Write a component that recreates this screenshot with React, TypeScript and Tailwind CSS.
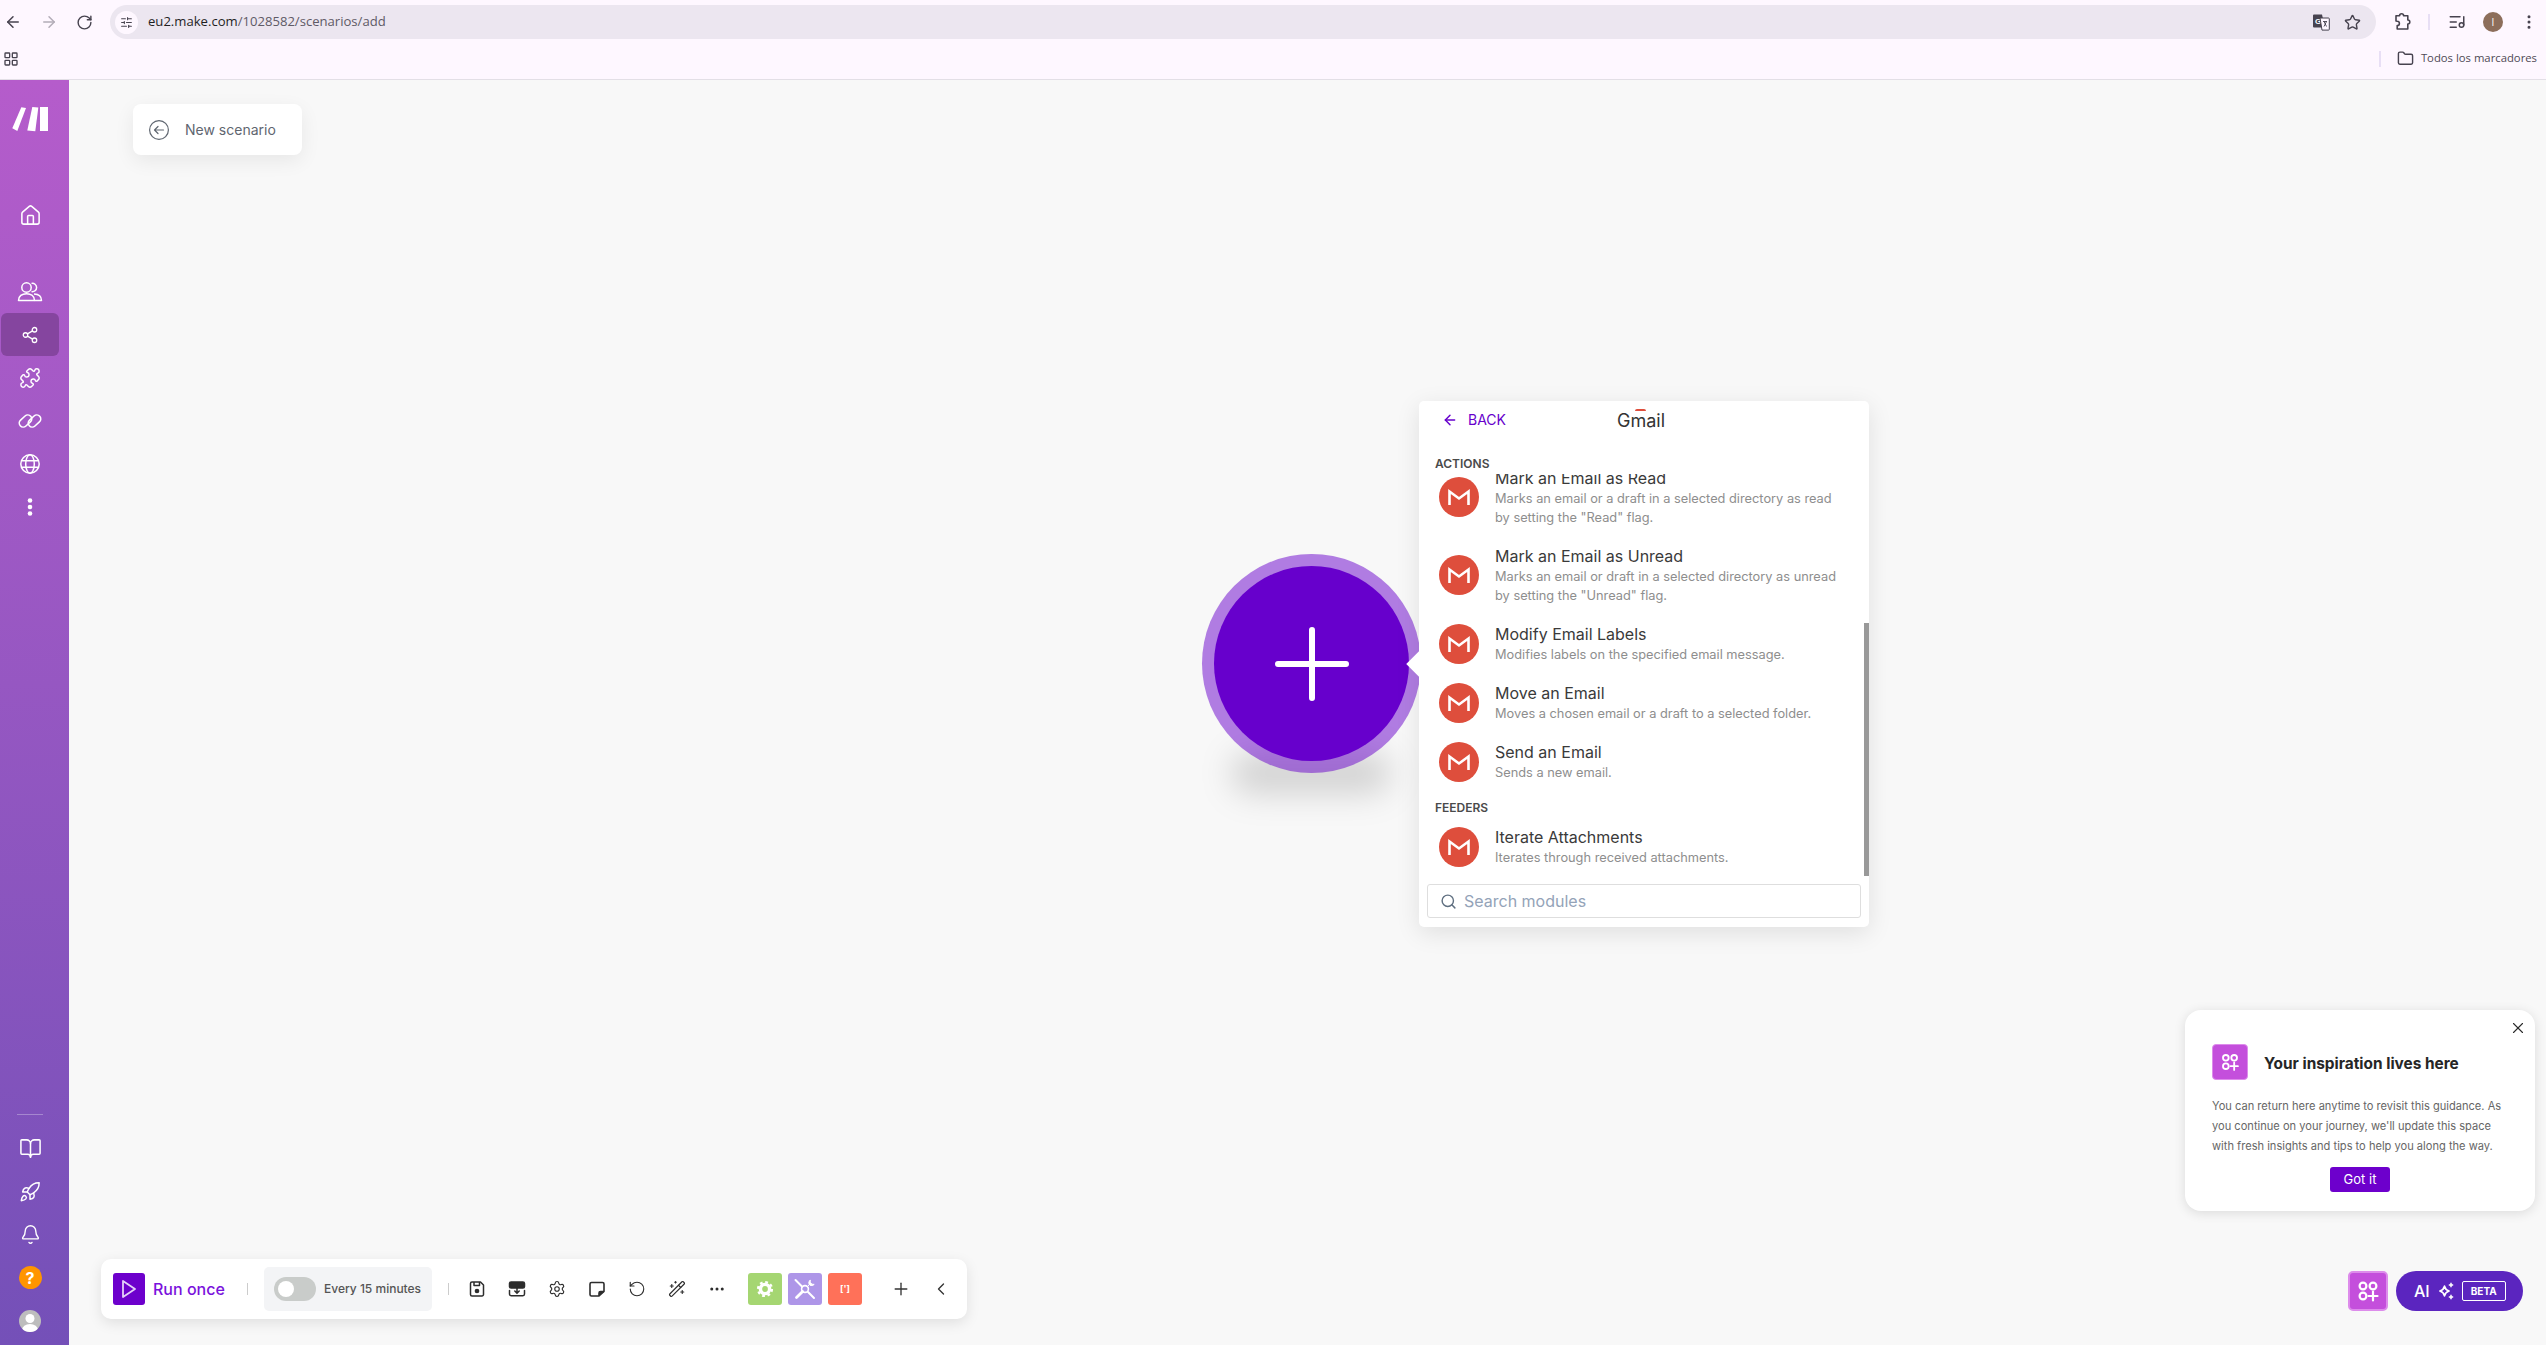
import React from "react";
import {
  ArrowLeft,
  ArrowRight,
  Bell,
  BookOpen,
  ChevronLeft,
  Ellipsis,
  EllipsisVertical,
  Folder,
  House,
  LayoutGrid,
  ListMusic,
  Plus,
  Puzzle,
  Rocket,
  RotateCcw,
  RotateCw,
  Search,
  Settings,
  Share2,
  SlidersHorizontal,
  Star,
  WandSparkles,
  X,
} from "lucide-react";

const GmailIcon = ({ lift }: { lift: boolean }) => (
  <div className={`w-[40px] h-[40px] shrink-0 rounded-full bg-[#de4e3c] flex items-center justify-center ${lift ? "mb-[2px]" : ""}`}>
    <svg width="40" height="40" viewBox="0 0 40 40" fill="none" stroke="#fff" strokeWidth="2.6">
      <path d="M10.5 28V14.5L20 21.5L29.5 14.5V28" />
    </svg>
  </div>
);

const AppsPlus = ({ size }: { size: number }) => (
  <svg width={size} height={size} viewBox="0 0 24 24" fill="none" stroke="#fff" strokeWidth="2.2" strokeLinecap="round">
    <circle cx="7" cy="7" r="3.4" />
    <circle cx="17" cy="7" r="3.4" />
    <circle cx="7" cy="17" r="3.4" />
    <path d="M12.5 17h9M17 12.5v9" />
  </svg>
);

const MakeLogo = () => (
  <svg width="36" height="26" viewBox="0 0 36 26" fill="#fff">
    <polygon points="9.3,1.3 14,2 5.3,25 0.3,22.3" />
    <polygon points="20.3,1 26.3,1.5 23.3,25.3 15.3,24.5" />
    <polygon points="28,1 36,1 36,25 28,25" />
  </svg>
);

const TranslateIcon = () => (
  <svg width="18" height="18" viewBox="0 0 18 18">
    <path d="M1 2.5a1 1 0 0 1 1-1h8l3 13H2a1 1 0 0 1-1-1z" fill="#47434f" />
    <text x="3" y="10.5" fontSize="8" fontWeight="700" fill="#fff" fontFamily="Liberation Sans, sans-serif">G</text>
    <path d="M8 5h8.5a.8.8 0 0 1 .8.8v10.5a.8.8 0 0 1-.8.8H10z" fill="#fef7ff" stroke="#47434f" strokeWidth="1" />
    <path d="M11 8.5h4M12 8.5l2.5 5M14.5 8.5l-2.5 5" stroke="#47434f" strokeWidth="0.9" fill="none" />
  </svg>
);

const ExtensionIcon = () => (
  <svg width="18" height="18" viewBox="0 0 18 18" fill="none" stroke="#47434f" strokeWidth="1.6">
    <path d="M2 2.8h3.6a2 2 0 0 1 4 0h4.2v4.2a2 2 0 0 1 0 4v5H3.2v-3.4a2.2 2.2 0 0 0 0-4.4L2 8z" strokeLinejoin="round" />
  </svg>
);

// sidebar drawings lucide has no close match for
const UsersIcon = () => (
  <svg width="26" height="24" viewBox="0 0 26 24" fill="none" stroke="#fff" strokeWidth="1.5" strokeLinejoin="round">
    <circle cx="9.500" cy="7.500" r="4.700" />
    <path d="M14.500 3.400a4.200 4.200 0 1 1 0 8.200" />
    <path d="M1.500 20.500c0-4.500 3.500-6.800 8-6.800s8 2.300 8 6.800z" />
    <path d="M17 14c4 .2 7.500 2.300 7.500 6.500H17.500" />
  </svg>
);

const ChainIcon = () => (
  <svg width="26" height="26" viewBox="0 0 26 26" fill="none" stroke="#fff" strokeWidth="1.6">
    <rect x="1.500" y="9" width="14" height="8" rx="4" transform="rotate(-42 8.500 13)" />
    <rect x="10.500" y="9" width="14" height="8" rx="4" transform="rotate(-42 17.500 13)" />
  </svg>
);

const GlobeIcon = () => (
  <svg width="22" height="22" viewBox="0 0 22 22" fill="none" stroke="#fff" strokeWidth="1.5">
    <circle cx="11" cy="11" r="9.200" />
    <ellipse cx="11" cy="11" rx="4.300" ry="9.200" />
    <path d="M2.500 7.800h17M2.500 14.200h17" />
  </svg>
);

const DotsIcon = () => (
  <svg width="8" height="20" viewBox="0 0 8 20" fill="#fff">
    <circle cx="4" cy="3.500" r="2.300" />
    <circle cx="4" cy="10" r="2.300" />
    <circle cx="4" cy="16.500" r="2.300" />
  </svg>
);

// toolbar drawings
const SaveIcon = () => (
  <svg width="18" height="18" viewBox="0 0 18 18" fill="none" stroke="#2d2d2d" strokeWidth="1.500" strokeLinejoin="round">
    <path d="M4 2h8.500L15.500 5v9.500A1.500 1.500 0 0 1 14 16H4a1.500 1.500 0 0 1-1.500-1.500v-11A1.500 1.500 0 0 1 4 2z" />
    <path d="M6 2v3.500h5.500V2" />
    <circle cx="9" cy="11" r="1.600" fill="#2d2d2d" />
  </svg>
);

const FlowIcon = () => (
  <svg width="18" height="18" viewBox="0 0 18 18" fill="none" stroke="#2d2d2d" strokeWidth="1.5" strokeLinecap="round">
    <rect x="1.5" y="2" width="15" height="6" rx="1.6" fill="#2d2d2d" />
    <path d="M9 7v6M6.8 11l2.2 2.2 2.2-2.2" />
    <path d="M1.5 10.5v3.6a1.6 1.6 0 0 0 1.6 1.6h11.8a1.6 1.6 0 0 0 1.6-1.6v-3.6" />
  </svg>
);

const NoteIcon = () => (
  <svg width="18" height="18" viewBox="0 0 18 18" fill="none" stroke="#2d2d2d" strokeWidth="1.600" strokeLinejoin="round">
    <path d="M3.500 2.500h11A1.500 1.500 0 0 1 16 4v7.500L11 16H3.500A1.500 1.500 0 0 1 2 14.500V4a1.500 1.500 0 0 1 1.500-1.500z" />
    <path d="M11 16v-3a1.500 1.500 0 0 1 1.500-1.500H16" fill="#2d2d2d" />
  </svg>
);

const GearFill = () => (
  <svg width="20" height="20" viewBox="0 0 20 20" fill="none" stroke="#fff">
    <circle cx="10" cy="10" r="4.6" strokeWidth="3.4" />
    <circle cx="10" cy="10" r="7" strokeWidth="2.2" strokeDasharray="2.8 2.7" />
  </svg>
);

const ToolsIcon = () => (
  <svg width="24" height="24" viewBox="0 0 24 24" fill="none" stroke="#fff" strokeWidth="2" strokeLinecap="round">
    <path d="M2.5 3l6.5 6.5M15 15l6 6" />
    <circle cx="12" cy="12" r="3.4" strokeWidth="1.6" />
    <path d="M9.6 14.4L3.5 20.5" strokeWidth="2.8" />
    <path d="M14.4 9.6l3-3M17 3.2a3.6 3.6 0 0 0-1 4l1.2 1.2a3.6 3.6 0 0 0 4-1l-2.2-.2-1.6-1.6z" fill="#fff" strokeWidth="1" />
  </svg>
);

const AiSparkles = () => (
  <svg width="18" height="18" viewBox="0 0 18 18" fill="none" stroke="#fff" strokeWidth="1.7" strokeLinejoin="round">
    <path d="M7.5 4.2c.7 2.9 1.7 3.9 4.6 4.8-2.9.9-3.9 1.9-4.6 4.8C6.8 10.9 5.8 9.900 2.900 9c2.900-.9 3.900-1.900 4.600-4.800z" />
    <path d="M14 .8v4.400M11.800 3h4.400M14 12.800v4.400M11.800 15h4.400" strokeWidth="1.500" />
  </svg>
);

type Item = { title: string; lines: string[] };

const actions: Item[] = [
  {
    title: "Mark an Email as Read",
    lines: ["Marks an email or a draft in a selected directory as read", 'by setting the "Read" flag.'],
  },
  {
    title: "Mark an Email as Unread",
    lines: ["Marks an email or draft in a selected directory as unread", 'by setting the "Unread" flag.'],
  },
  { title: "Modify Email Labels", lines: ["Modifies labels on the specified email message."] },
  { title: "Move an Email", lines: ["Moves a chosen email or a draft to a selected folder."] },
  { title: "Send an Email", lines: ["Sends a new email."] },
];

const ModuleRow = ({ item }: { item: Item }) => (
  <div className="flex items-center pl-[20px] pr-[24px] pt-[10px] pb-[9px]">
    <GmailIcon lift={item.lines.length > 1} />
    <div className="ml-[16px]">
      <div className="text-[16px] leading-[21px] text-[#3a3a3a]">{item.title}</div>
      {item.lines.map((l) => (
        <div key={l} className="text-[12.8px] leading-[19px] text-[#8e8e8e] whitespace-nowrap">
          {l}
        </div>
      ))}
    </div>
  </div>
);

const NavCell = ({ children, active }: { children: React.ReactNode; active?: boolean }) => (
  <div className={`h-[43px] w-[58px] ml-[1px] rounded-md flex items-center justify-center ${active ? "bg-[#85459f]" : ""}`}>
    {children}
  </div>
);

export default function App() {
  return (
    <div className="h-screen w-full flex flex-col overflow-hidden font-['Inter',sans-serif] bg-[#f8f8f8]">
      {/* browser chrome */}
      <div className="bg-[#fef7ff] font-['Open_Sans',sans-serif]">
        <div className="h-[44px] flex items-center pl-[4px] pr-[8px]">
          <div className="flex items-center gap-[18px] text-[#47434f]">
            <ArrowLeft size={18} />
            <ArrowRight size={18} className="text-[#b3adb8]" />
            <RotateCw size={17} />
          </div>
          <div className="ml-[17px] w-[2266px] h-[34px] rounded-full bg-[#ece6f0] flex items-center pl-[5px] pr-[15px]">
            <div className="w-[23px] h-[23px] rounded-full bg-[#fef7ff] flex items-center justify-center text-[#47434f]">
              <SlidersHorizontal size={13} />
            </div>
            <span className="ml-[10px] text-[13.1px] text-[#1f1f1f]">
              eu2.make.com<span className="text-[#5f5a66]">/1028582/scenarios/add</span>
            </span>
            <div className="ml-auto flex items-center gap-[14px] text-[#47434f]">
              <TranslateIcon />
              <Star size={17} />
            </div>
          </div>
          <div className="ml-[18px] flex items-center">
            <ExtensionIcon />
            <div className="ml-[16px] w-[2px] h-[16px] bg-[#e8dff5]" />
            <div className="ml-[18px] text-[#47434f]">
              <ListMusic size={18} />
            </div>
            <div className="ml-[17px] w-[20px] h-[20px] rounded-full bg-[#8d6e5b] flex items-center justify-center text-[10px] text-white">
              I
            </div>
            <div className="ml-[17px] text-[#47434f]">
              <EllipsisVertical size={18} />
            </div>
          </div>
        </div>
        <div className="h-[36px] pb-[6px] flex items-center border-b border-[#e3dfe6] pl-[3px] pr-[9px]">
          <LayoutGrid size={16} className="text-[#47434f]" />
          <div className="ml-auto flex items-center">
            <div className="w-[2px] h-[16px] bg-[#e8dff5]" />
            <Folder size={17} className="ml-[16px] text-[#47434f]" />
            <span className="ml-[7px] text-[11.3px] text-[#4e4a55]">Todos los marcadores</span>
          </div>
        </div>
      </div>

      <div className="flex-1 flex min-h-0">
        {/* sidebar */}
        <aside className="w-[69px] shrink-0 flex flex-col items-start pt-[26px] bg-gradient-to-b from-[#b55ccb] to-[#7450b8] text-white">
          <div className="ml-[12px]">
            <MakeLogo />
          </div>
          <div className="mt-[62px]">
            <NavCell>
              <House size={23} strokeWidth={1.6} />
            </NavCell>
          </div>
          <div className="mt-[33px] flex flex-col">
            <NavCell>
              <UsersIcon />
            </NavCell>
            <NavCell active>
              <Share2 size={18} strokeWidth={1.7} />
            </NavCell>
            <NavCell>
              <Puzzle size={22} strokeWidth={1.6} />
            </NavCell>
            <NavCell>
              <ChainIcon />
            </NavCell>
            <NavCell>
              <GlobeIcon />
            </NavCell>
            <NavCell>
              <DotsIcon />
            </NavCell>
          </div>
          <div className="mt-auto ml-[17px] w-[26px] h-[1px] bg-white/30 mb-[12px]" />
          <NavCell>
            <BookOpen size={23} strokeWidth={1.6} />
          </NavCell>
          <NavCell>
            <Rocket size={22} strokeWidth={1.6} />
          </NavCell>
          <NavCell>
            <Bell size={21} strokeWidth={1.6} />
          </NavCell>
          <NavCell>
            <div className="w-[23px] h-[23px] rounded-full bg-[#ff9500] flex items-center justify-center text-[16px] font-bold">
              ?
            </div>
          </NavCell>
          <div className="mb-[3px]">
            <NavCell>
              <div className="w-[22px] h-[22px] rounded-full bg-[#bdbdbd] overflow-hidden">
                <svg width="22" height="22" viewBox="0 0 22 22" fill="#fff">
                  <circle cx="11" cy="8.500" r="4.500" />
                  <ellipse cx="11" cy="20" rx="8" ry="6" />
                </svg>
              </div>
            </NavCell>
          </div>
        </aside>

        {/* canvas */}
        <main className="relative flex-1">
          <div className="absolute left-[64px] top-[24px] w-[169px] h-[51px] rounded-lg bg-white shadow-[0_6px_20px_rgba(0,0,0,0.07)] flex items-center pl-[16px] text-[#5f6670]">
            <svg width="20" height="20" viewBox="0 0 20 20" fill="none" stroke="#5f6670" strokeWidth="1.200" strokeLinecap="round" strokeLinejoin="round">
              <circle cx="10" cy="10" r="9.400" />
              <path d="M14.500 10H5.800M9 6.500L5.500 10 9 13.500" />
            </svg>
            <span className="ml-[16px] text-[14px]">New scenario</span>
          </div>

          {/* module */}
          <div className="absolute left-[1162px] top-[672px] w-[160px] h-[42px] rounded-full bg-black/15 blur-[16px]" />
          <div className="absolute left-[1133px] top-[474px] w-[219px] h-[219px] rounded-full bg-[#6700cc]/50 flex items-center justify-center">
            <div className="w-[195px] h-[195px] rounded-full bg-[#6700cc] flex items-center justify-center">
              <svg width="76" height="76" viewBox="0 0 76 76" stroke="#fff" strokeWidth="6" strokeLinecap="round">
                <path d="M38 4v68M4 38h68" />
              </svg>
            </div>
          </div>

          {/* module picker */}
          <div className="absolute left-[1350px] top-[321px] w-[450px] h-[526px] rounded-[5px] bg-white shadow-[0_6px_24px_rgba(0,0,0,0.1)] flex flex-col">
            <div className="absolute -left-[9px] top-[254px] w-[18px] h-[18px] rotate-45 bg-white" />
            <div className="relative h-[38px] grid grid-cols-[1fr_auto_1fr] items-center pl-[23px] pr-[29px]">
              <div className="flex items-center text-[#6700cc] gap-[10px]">
                <ArrowLeft size={16} strokeWidth={2.200} />
                <span className="text-[14px] leading-none">BACK</span>
              </div>
              <div className="relative text-[18px] text-[#333]">
                Gmail
                <div className="absolute left-[18px] top-[2px] w-[11px] h-[2px] rounded-t-full bg-[#de4e3c]" />
              </div>
              <div />
            </div>
            <div className="h-[35px] pt-[17px] pl-[16px] text-[12px] leading-[16px] font-semibold text-[#4a4a4a]">ACTIONS</div>
            <div className="relative h-[402px] overflow-hidden">
              <div className="-mt-[16px]">
                {actions.map((a) => (
                  <ModuleRow key={a.title} item={a} />
                ))}
                <div className="h-[26px] pt-[9px] pl-[16px] text-[12px] leading-[16px] font-semibold text-[#4a4a4a]">FEEDERS</div>
                <ModuleRow item={{ title: "Iterate Attachments", lines: ["Iterates through received attachments."] }} />
              </div>
              <div className="absolute right-0 top-[149px] w-[5px] h-[253px] bg-[#999]" />
            </div>
            <div className="mt-[8px] mx-[8px] h-[34px] rounded-[3px] border border-[#dedede] flex items-center pl-[12px] text-[16px] text-[#94a3b8]">
              <Search size={17} className="text-[#5f6f80]" />
              <span className="ml-[7px]">Search modules</span>
            </div>
          </div>

          {/* inspiration tip */}
          <div className="absolute right-[11px] top-[930px] w-[350px] h-[201px] rounded-2xl bg-white shadow-[0_2px_12px_rgba(0,0,0,0.12)] pl-[27px] pr-[20px] pt-[34px]">
            <X size={18} strokeWidth={1.500} className="absolute right-[8px] top-[9px] text-[#2a2a2a]" />
            <div className="flex items-center">
              <div className="w-[36px] h-[36px] rounded-[4px] bg-[#c44fdc] border border-[#dd8ceb] flex items-center justify-center">
                <AppsPlus size={20} />
              </div>
              <span className="ml-[16px] pt-[3px] text-[15.4px] font-bold text-[#262626]">Your inspiration lives here</span>
            </div>
            <p className="mt-[16px] text-[11.1px] leading-[20px] text-[#666] whitespace-nowrap">
              You can return here anytime to revisit this guidance. As
              <br />
              you continue on your journey, we'll update this space
              <br />
              with fresh insights and tips to help you along the way.
            </p>
            <div className="mt-[11px] ml-[118px] w-[60px] h-[25px] rounded-[3px] bg-[#6d00cc] text-white text-[13px] flex items-center justify-center">
              Got it
            </div>
          </div>

          {/* ai buttons */}
          <div className="absolute right-[23px] bottom-[34px] flex items-center gap-[8px]">
            <div className="w-[40px] h-[40px] rounded-[5px] bg-[#c44fdc] border-2 border-[#dd8ceb] flex items-center justify-center">
              <AppsPlus size={24} />
            </div>
            <div className="w-[127px] h-[40px] rounded-full bg-[#5b25bf] flex items-center pl-[18px] text-white">
              <span className="text-[16px] font-medium">AI</span>
              <span className="ml-[7px]">
                <AiSparkles />
              </span>
              <div className="ml-[7px] w-[44px] h-[20px] rounded-[2px] border border-white flex items-center justify-center text-[10px] font-bold">
                BETA
              </div>
            </div>
          </div>

          {/* toolbar */}
          <div className="absolute left-[32px] bottom-[26px] w-[866px] h-[60px] rounded-[10px] bg-white shadow-[0_4px_14px_rgba(0,0,0,0.1)] flex items-center pl-[12px]">
            <div className="w-[32px] h-[32px] rounded-[3px] bg-[#6d00cc] flex items-center justify-center">
              <svg width="16" height="20" viewBox="0 0 16 20" fill="none" stroke="#e4d0f7" strokeWidth="1.800" strokeLinejoin="round">
                <path d="M2 2l12 8-12 8z" />
              </svg>
            </div>
            <span className="ml-[8px] w-[71px] text-[16px] font-medium text-[#7a12dc] whitespace-nowrap">Run once</span>
            <div className="ml-[23px] w-[1px] h-[12px] bg-[#ccc]" />
            <div className="ml-[16px] w-[168px] h-[44px] rounded-[5px] bg-[#f3f4f6] flex items-center pl-[10px]">
              <div className="w-[42px] h-[24px] rounded-full bg-[#c9ccca] flex items-center pl-[4px]">
                <div className="w-[16px] h-[16px] rounded-full bg-white" />
              </div>
              <span className="ml-[8px] text-[12px] font-medium text-[#555] whitespace-nowrap">Every 15 minutes</span>
            </div>
            <div className="ml-[16px] w-[1px] h-[12px] bg-[#ccc]" />
            <div className="ml-[8px] flex items-center text-[#2d2d2d]">
              <div className="w-[40px] h-[40px] flex items-center justify-center">
                <SaveIcon />
              </div>
              <div className="w-[40px] h-[40px] flex items-center justify-center">
                <FlowIcon />
              </div>
              <div className="w-[40px] h-[40px] flex items-center justify-center">
                <Settings size={18} strokeWidth={1.500} />
              </div>
              <div className="w-[40px] h-[40px] flex items-center justify-center">
                <NoteIcon />
              </div>
              <div className="w-[40px] h-[40px] flex items-center justify-center">
                <RotateCcw size={18} strokeWidth={1.500} />
              </div>
              <div className="w-[40px] h-[40px] flex items-center justify-center">
                <WandSparkles size={18} strokeWidth={1.500} />
              </div>
              <div className="w-[40px] h-[40px] flex items-center justify-center">
                <Ellipsis size={18} strokeWidth={2} />
              </div>
            </div>
            <div className="ml-[11px] flex items-center gap-[6px]">
              <div className="w-[34px] h-[32px] rounded-[3px] bg-[#a5d672] flex items-center justify-center">
                <GearFill />
              </div>
              <div className="w-[34px] h-[32px] rounded-[3px] bg-[#ae96e8] flex items-center justify-center">
                <ToolsIcon />
              </div>
              <div className="w-[34px] h-[32px] rounded-[3px] bg-[#ff7159] flex items-center justify-center text-white text-[9px] font-bold">
                [']
              </div>
            </div>
            <div className="ml-[19px] flex items-center text-[#333]">
              <div className="w-[40px] h-[40px] flex items-center justify-center">
                <Plus size={20} strokeWidth={1.600} />
              </div>
              <div className="w-[40px] h-[40px] flex items-center justify-center">
                <ChevronLeft size={20} strokeWidth={1.600} />
              </div>
            </div>
          </div>
        </main>
      </div>
    </div>
  );
}
